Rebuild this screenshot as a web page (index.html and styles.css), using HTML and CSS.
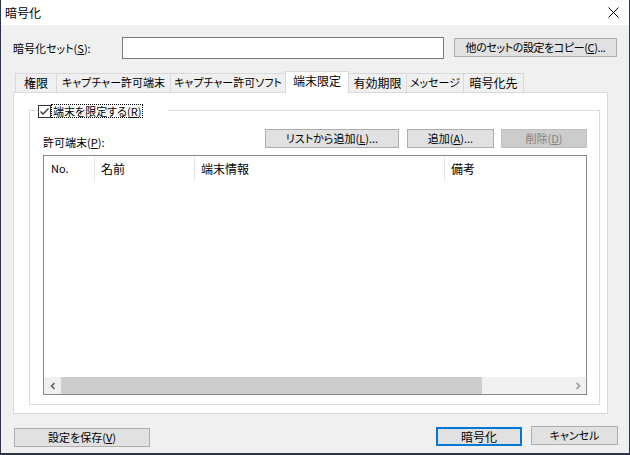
FILE: index.html
```html
<!DOCTYPE html>
<html lang="ja">
<head>
<meta charset="utf-8">
<title>暗号化</title>
<link rel="stylesheet" href="styles.css">
</head>
<body>
<div class="window">
  <div class="titlebar">
    <span class="title">暗号化</span>
    <svg class="close" width="11" height="11" viewBox="0 0 11 11"><path d="M0.5 0.5 L10.5 10.5 M10.5 0.5 L0.5 10.5" stroke="#000" stroke-width="1" fill="none"/></svg>
  </div>
  <div class="content">
    <div class="setrow">
      <span class="setlabel sm">暗号化セット(<u>S</u>):</span>
      <div class="textbox"></div>
      <div class="btn copy sm">他のセットの設定をコピー(<u>C</u>)...</div>
    </div>
    <div class="tabs">
      <div class="tab t1">権限</div>
      <div class="tab t2 sm">キャプチャー許可端末</div>
      <div class="tab t3 sm">キャプチャー許可ソフト</div>
      <div class="tab t4 active">端末限定</div>
      <div class="tab t5">有効期限</div>
      <div class="tab t6 sm">メッセージ</div>
      <div class="tab t7">暗号化先</div>
    </div>
    <div class="panel">
      <div class="group">
        <div class="group-head">
          <div class="seg-left"></div>
          <div class="legend">
            <span class="checkbox"><svg width="11" height="11" viewBox="0 0 11 11"><path d="M1.5 5.5 L4 8 L9.5 2.5" stroke="#333" stroke-width="1.3" fill="none"/></svg></span>
            <span class="focus sm">端末を限定する(<u>R</u>)</span>
          </div>
          <div class="seg-right"></div>
        </div>
        <div class="group-body">
          <div class="listrow">
            <span class="listlabel sm">許可端末(<u>P</u>):</span>
            <div class="btn b-list sm">リストから追加(<u>L</u>)...</div>
            <div class="btn b-add sm">追加(<u>A</u>)...</div>
            <div class="btn b-del sm disabled">削除(<u>D</u>)</div>
          </div>
          <div class="listview">
            <div class="lv-header">
              <div class="col c1 sm">No.</div>
              <div class="col c2">名前</div>
              <div class="col c3">端末情報</div>
              <div class="col c4">備考</div>
            </div>
            <div class="lv-body"></div>
            <div class="hscroll">
              <div class="arrow left"><svg width="8" height="8" viewBox="0 0 8 8"><path d="M5.5 1 L2.5 4 L5.5 7" stroke="#606060" stroke-width="1.6" fill="none"/></svg></div>
              <div class="thumb"></div>
              <div class="track"></div>
              <div class="arrow right"><svg width="8" height="8" viewBox="0 0 8 8"><path d="M2.5 1 L5.5 4 L2.5 7" stroke="#9a9a9a" stroke-width="1.6" fill="none"/></svg></div>
            </div>
          </div>
        </div>
      </div>
    </div>
    <div class="footer">
      <div class="btn b-save sm">設定を保存(<u>V</u>)</div>
      <div class="spacer"></div>
      <div class="btn b-enc">暗号化</div>
      <div class="btn b-cancel sm">キャンセル</div>
    </div>
  </div>
</div>
</body>
</html>
```
FILE: styles.css
```css
html, body {
  margin: 0;
  padding: 0;
  background: #2b3444;
  width: 630px;
  height: 455px;
  overflow: hidden;
}
body {
  font-family: "Noto Sans CJK JP", "Noto Sans", sans-serif;
  font-size: 12px;
  font-feature-settings: "palt";
  color: #000;
}
.sm { font-size: 11px; }
u { text-decoration: underline; text-underline-offset: 1px; }
.window {
  margin-left: 1px;
  width: 628px;
  height: 453px;
  background: #f0f0f0;
  display: flex;
  flex-direction: column;
}
.titlebar {
  height: 25px;
  background: #fff;
  display: flex;
  align-items: center;
  justify-content: space-between;
  padding-left: 4px;
  padding-right: 10px;
}
.title { font-size: 12px; line-height: 14px; }
.close { display: block; }
.content {
  padding: 0 12px 0 12px;
  display: flex;
  flex-direction: column;
}
.setrow {
  margin-top: 12px;
  height: 22px;
  display: flex;
  align-items: flex-start;
}
.setlabel {
  width: 109px;
  line-height: 22px;
}
.textbox {
  width: 322px;
  height: 22px;
  box-sizing: border-box;
  background: #fff;
  border: 1px solid #7a7a7a;
}
.btn {
  box-sizing: border-box;
  background: #e1e1e1;
  border: 1px solid #adadad;
  height: 19px;
  line-height: 16px;
  text-align: center;
  white-space: nowrap;
}
.copy {
  width: 163px;
  margin-left: 10px;
  margin-top: 1px;
  letter-spacing: -0.4px;
}
.tabs {
  margin-top: 12px;
  margin-left: 2px;
  height: 21px;
  display: flex;
  align-items: flex-end;
}
.tab {
  box-sizing: border-box;
  height: 19px;
  border: 1px solid #d9d9d9;
  border-bottom: none;
  background: #f0f0f0;
  text-align: center;
  line-height: 17px;
  white-space: nowrap;
  margin-left: -1px;
}
.tab.t1 { margin-left: 0; width: 42px; }
.tab.t2 { width: 115px; }
.tab.t3 { width: 116px; }
.tab.t4 { width: 64px; }
.tab.t5 { width: 59px; }
.tab.t6 { width: 58px; }
.tab.t7 { width: 61px; }
.tab.active {
  height: 22px;
  margin-bottom: -1px;
  background: #fff;
  line-height: 18px;
  position: relative;
  z-index: 1;
}
.panel {
  width: 595px;
  height: 322px;
  box-sizing: border-box;
  background: #fff;
  border: 1px solid #d9d9d9;
  padding: 11px 7px 8px 15px;
}
.group {
  width: 571px;
}
.group-head {
  height: 14px;
  display: flex;
  align-items: flex-start;
}
.seg-left {
  width: 8px;
  height: 8px;
  margin-top: 6px;
  box-sizing: border-box;
  border-top: 1px solid #dcdcdc;
  border-left: 1px solid #dcdcdc;
}
.legend {
  width: 131px;
  height: 14px;
  display: flex;
  align-items: flex-start;
}
.checkbox {
  width: 13px;
  height: 13px;
  box-sizing: border-box;
  border: 1px solid #333;
  background: #fff;
  margin-left: 1px;
  margin-top: 1px;
  display: flex;
  align-items: center;
  justify-content: center;
}
.checkbox svg { display: block; }
.focus {
  height: 14px;
  box-sizing: border-box;
  border: 1px dotted #000;
  line-height: 12px;
  padding: 0 1px;
  white-space: nowrap;
}
.seg-right {
  flex: 1;
  height: 8px;
  margin-top: 6px;
  box-sizing: border-box;
  border-top: 1px solid #dcdcdc;
  border-right: 1px solid #dcdcdc;
}
.group-body {
  height: 287px;
  box-sizing: border-box;
  border: 1px solid #dcdcdc;
  border-top: none;
  padding: 11px 12px 9px 13px;
  display: flex;
  flex-direction: column;
}
.listrow {
  height: 19px;
  display: flex;
  align-items: flex-end;
}
.listlabel {
  flex: 1;
  line-height: 14px;
  margin-bottom: -1px;
}
.b-list { width: 134px; }
.b-add { width: 87px; margin-left: 8px; }
.b-del { width: 86px; margin-left: 7px; }
.btn.disabled {
  background: #cccccc;
  border-color: #bfbfbf;
  color: #838383;
}
.listview {
  margin-top: 7px;
  width: 544px;
  height: 240px;
  box-sizing: border-box;
  border: 1px solid #828790;
  background: #fff;
  display: flex;
  flex-direction: column;
}
.lv-header {
  height: 25px;
  display: flex;
}
.col {
  box-sizing: border-box;
  border-right: 1px solid #e5e5e5;
  padding-left: 6px;
  line-height: 25px;
}
.col.c1 { width: 51px; padding-left: 7px; }
.col.c2 { width: 100px; }
.col.c3 { width: 250px; }
.col.c4 { flex: 1; border-right: none; }
.lv-body { flex: 1; }
.hscroll {
  height: 17px;
  display: flex;
  background: #f0f0f0;
}
.arrow {
  width: 17px;
  height: 17px;
  display: flex;
  align-items: center;
  justify-content: center;
}
.arrow svg { display: block; }
.thumb {
  width: 421px;
  background: #cdcdcd;
}
.track { flex: 1; }
.footer {
  margin-top: 13px;
  height: 20px;
  display: flex;
  align-items: flex-start;
}
.b-save {
  width: 136px;
  margin-left: 1px;
  margin-top: 1px;
}
.spacer { flex: 1; }
.b-enc {
  width: 86px;
  border: 2px solid #0078d7;
  line-height: 15px;
}
.b-cancel {
  width: 87px;
  margin-left: 9px;
  margin-right: -1px;
  margin-top: -1px;
}
```
